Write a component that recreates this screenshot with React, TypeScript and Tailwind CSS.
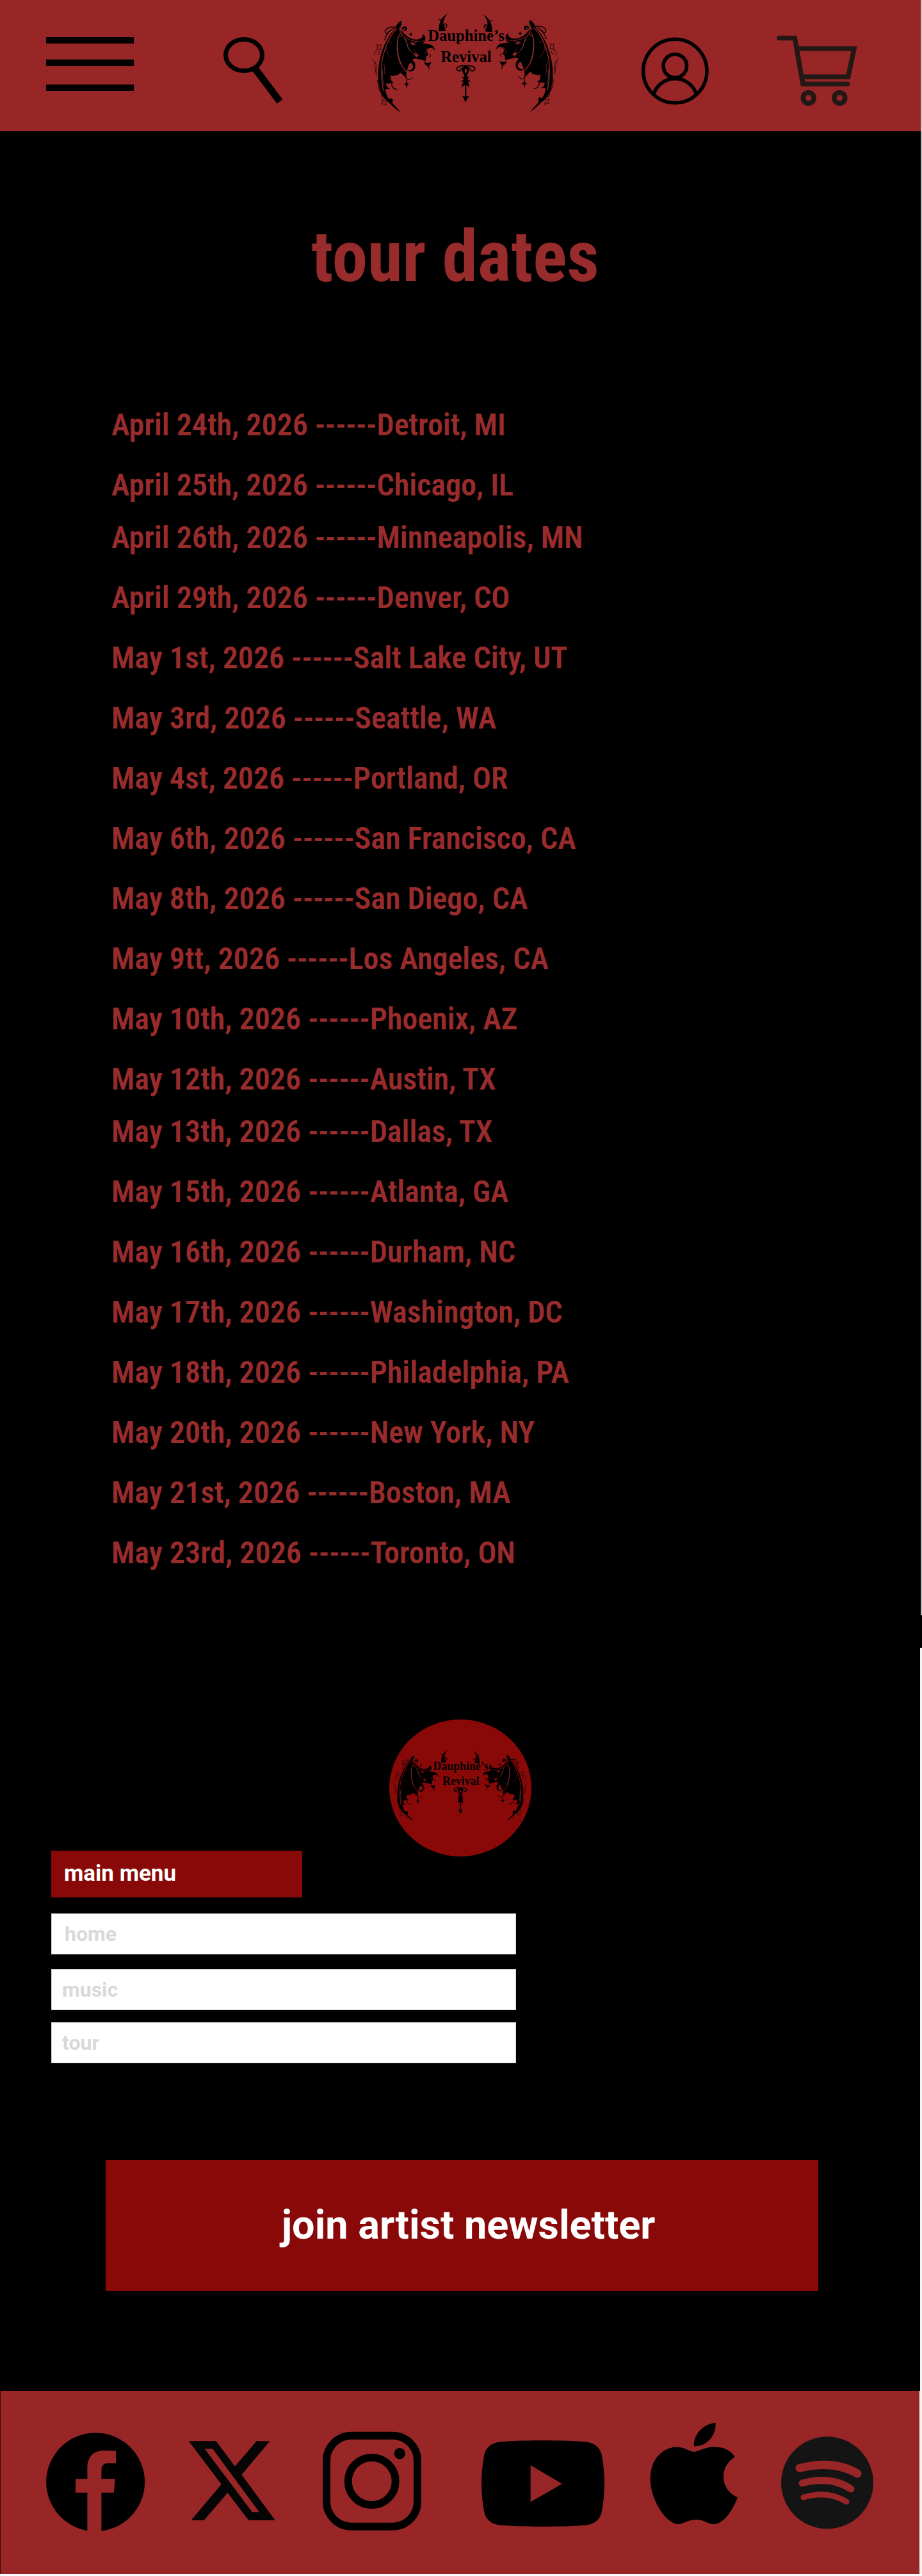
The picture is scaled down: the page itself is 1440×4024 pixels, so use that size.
import type { ReactNode } from "react";

const BRICK = "#982626";
const CRIMSON = "#890909";

const tourGroups: [string, string][][] = [
  [
    ["April 24th, 2026", "Detroit, MI"],
    ["April 25th, 2026", "Chicago, IL"],
  ],
  [
    ["April 26th, 2026", "Minneapolis, MN"],
    ["April 29th, 2026", "Denver, CO"],
    ["May 1st, 2026", "Salt Lake City, UT"],
    ["May 3rd, 2026", "Seattle, WA"],
    ["May 4st, 2026", "Portland, OR"],
    ["May 6th, 2026", "San Francisco, CA"],
    ["May 8th, 2026", "San Diego, CA"],
    ["May 9tt, 2026", "Los Angeles, CA"],
    ["May 10th, 2026", "Phoenix, AZ"],
    ["May 12th, 2026", "Austin, TX"],
  ],
  [
    ["May 13th, 2026", "Dallas, TX"],
    ["May 15th, 2026", "Atlanta, GA"],
    ["May 16th, 2026", "Durham, NC"],
    ["May 17th, 2026", "Washington, DC"],
    ["May 18th, 2026", "Philadelphia, PA"],
    ["May 20th, 2026", "New York, NY"],
    ["May 21st, 2026", "Boston, MA"],
    ["May 23rd, 2026", "Toronto, ON"],
  ],
];

function Wing({ ground }: { ground: string }) {
  return (
    <g strokeLinecap="round" strokeLinejoin="round">
      {/* membrane */}
      <path
        fill="#000"
        d="M263 97 C248 102 236 116 232 134 C205 160 180 205 167 250 C153 295 148 345 155 395 C160 430 175 462 203 482 C222 500 240 516 258 529 C244 508 228 496 217 480 C223 474 222 464 214 461 C208 459 203 463 204 468 C194 452 187 436 185 418 L208 416 C196 412 188 402 190 390 C200 396 212 386 226 388 C210 378 204 366 212 352 C220 362 226 350 238 354 C242 346 246 344 249 348 C252 340 258 338 262 346 C270 352 278 360 285 371 C282 350 284 334 290 322 C296 300 306 284 322 274 C340 276 356 280 376 287 C372 272 378 262 388 256 C378 244 378 232 390 226 C400 222 410 226 418 237 C416 218 402 206 384 207 C360 202 334 202 312 213 C304 196 296 184 286 176 C270 164 258 150 252 134 C262 124 266 110 263 97 Z"
      />
      {/* arm hooks */}
      <path fill="#000" d="M256 134 C270 158 290 176 316 184 C340 188 362 182 362 160 C376 168 378 190 362 202 C344 214 312 204 294 190 C276 176 262 158 256 134 Z" />
      <path fill="#000" d="M262 132 C272 118 288 124 287 136 C286 146 274 148 272 140 C278 142 282 136 276 133 C270 131 268 140 274 150 Z" />
      <path fill="#000" d="M290 284 C312 272 330 294 326 314 C322 334 300 342 288 328 C304 332 318 322 315 308 C312 296 302 290 290 296 Z" />
      <path fill="#000" d="M206 350 C188 352 178 368 184 384 C192 376 200 368 214 368 Z" />
      <path fill="#000" d="M365 291 C380 296 392 296 401 289 C398 300 394 306 391 309 L391 334 L386 312 C376 306 370 300 365 291 Z" />
      <path fill="#000" d="M285 378 L289 391 L298 395 L289 399 L285 415 L281 399 L272 395 L281 391 Z" />
      <path fill="#000" d="M305 151 L308 158 L314 161 L308 164 L305 171 L302 164 L296 161 L302 158 Z" />
      {/* veins showing the ground colour */}
      <g fill="none" stroke={ground}>
        <path strokeWidth="4" d="M240 134 C210 160 185 215 174 265 C164 310 166 375 176 425" />
        <path strokeWidth="4" d="M247 170 C236 210 240 262 256 296 C264 312 276 322 282 334" />
        <path strokeWidth="3" d="M268 172 C288 192 286 222 302 238 C310 250 324 254 338 258" />
        <path strokeWidth="3" d="M250 136 C262 170 290 192 336 194" />
        <path strokeWidth="2" d="M204 180 C200 204 208 206 216 200 M190 216 C186 240 200 262 214 272 M178 300 C188 320 176 336 186 354" />
        <path strokeWidth="2" d="M300 206 C322 192 344 200 366 190 M320 234 C332 240 328 252 322 256 M384 226 C374 236 370 244 372 254" />
        <circle cx="256" cy="164" r="7" strokeWidth="3" />
      </g>
      <path fill={ground} d="M330 246 L335 254 L344 259 L335 263 L331 271 L327 262 L319 258 L327 254 Z" />
      <g fill="none" stroke="#6d5555" strokeWidth="2">
        <path d="M262 100 C264 114 258 124 250 130" />
        <path d="M244 180 C238 212 244 262 258 294" />
        <path d="M172 330 C174 360 172 376 178 398" />
        <path d="M280 182 C290 206 290 226 300 238" />
      </g>
      {/* flourishes */}
      <g fill="none" stroke="#000">
        <path strokeWidth="4" d="M236 130 C214 122 190 130 184 146 C182 160 200 160 200 148 M224 134 C206 140 192 160 182 186" />
        <path strokeWidth="3" d="M284 366 C290 378 308 376 312 362 M285 366 L285 384 M392 256 C402 252 400 268 392 268" />
        <path strokeWidth="4" d="M216 384 C212 402 222 420 240 418 M230 346 C236 352 244 352 250 344" />
        <path strokeWidth="3" d="M149 376 C152 410 160 430 172 446 C162 446 164 456 176 456" />
        <g stroke="#2a0a0a" strokeWidth="3">
          <path d="M136 262 C130 244 142 234 152 240 C164 246 158 260 148 256 M126 278 C138 286 136 320 144 352 M138 290 C148 310 140 330 142 344" />
          <path d="M146 208 L154 212 L166 210 L161 222 L165 234 L154 230 L144 232 L149 220 Z M170 466 L180 470 L191 466 L187 478 L190 494 L181 488 L169 488 L174 478 Z" />
        </g>
      </g>
    </g>
  );
}

function Horn() {
  return (
    <g>
      <path d="M477 64 C456 88 450 112 470 144 L436 146 C434 118 444 82 477 64 Z" />
      <path
        fill="none"
        stroke="#000"
        strokeWidth="4"
        strokeLinecap="round"
        d="M456 134 C470 132 478 122 472 114 C466 108 458 116 464 121 M444 112 C450 100 444 88 438 92"
      />
    </g>
  );
}

function BandLogo({ ground, className }: { ground: string; className: string }) {
  return (
    <svg viewBox="120 60 882 472" className={className} role="img" aria-label="Dauphine's Revival">
      <Wing ground={ground} />
      <g transform="translate(1122 -4) scale(-1 1)">
        <Wing ground={ground} />
      </g>
      <Horn />
      <g transform="translate(1122 4) scale(-1 1)">
        <Horn />
      </g>
      {/* dagger pendant */}
      <g strokeLinecap="round" strokeLinejoin="round">
        <path
          fill="none"
          stroke="#000"
          strokeWidth="5"
          d="M562 310 C548 306 526 308 519 322 C524 338 544 334 538 322 M562 310 C576 306 600 308 606 322 C600 338 580 334 586 322"
        />
        <path d="M562 304 L570 314 C586 312 582 330 570 350 L567 362 L580 358 L570 372 L586 382 L570 384 C580 392 580 404 578 412 C574 402 570 400 565 400 L565 452 L578 449 C572 460 566 466 561 480 C556 466 552 460 546 449 L558 452 L558 400 C552 400 548 402 546 412 C542 404 544 392 554 384 L540 382 L554 372 L542 358 L557 362 L554 350 C542 330 538 312 554 314 Z" />
        <path fill={ground} d="M562 320 L568 330 L562 346 L556 330 Z" />
      </g>
      <g fontFamily="'Liberation Serif', serif" fontWeight="700" textAnchor="middle" fill="#000">
        <text x="564" y="193" fontSize="74">
          Dauphine’s
        </text>
        <text x="564" y="290" fontSize="74">
          Revival
        </text>
      </g>
    </svg>
  );
}

function SocialLink({ label, children }: { label: string; children: ReactNode }) {
  return (
    <a href="#" aria-label={label} className="shrink-0">
      {children}
    </a>
  );
}

function MenuLink({ children, className }: { children: ReactNode; className: string }) {
  return (
    <a
      href="#"
      className={`flex h-16 items-center border border-gray-300 bg-white text-[32px] font-bold text-[#d9d9d9] ${className}`}
    >
      {children}
    </a>
  );
}

export default function App() {
  return (
    <div className="bg-[#f3f3f3] font-['Roboto',sans-serif]">
      <header className="flex items-center justify-between border-r-2 border-[#d0c4c4] bg-[#982626] pr-[99px] pl-[72px]">
        <button type="button" aria-label="Open menu" className="shrink-0">
          <svg viewBox="0 0 137 205" className="w-[137px]">
            <path d="M0 58h137v10H0z M0 93h137v10H0z M0 132h137v10H0z" />
          </svg>
        </button>
        <button type="button" aria-label="Search" className="shrink-0">
          <svg viewBox="315 0 160 205" className="w-[160px]" fill="none" stroke="#000">
            <ellipse cx="381" cy="86" rx="28.5" ry="24.5" strokeWidth="7" />
            <path d="M399 108 L437 158.5" strokeWidth="11" />
          </svg>
        </button>
        <a href="#" className="shrink-0">
          <BandLogo ground={BRICK} className="mb-[8px] w-[294px]" />
        </a>
        <button type="button" aria-label="Account" className="shrink-0">
          <svg viewBox="980 0 128 205" className="w-[128px]" fill="none" stroke="#000" strokeWidth="5.5">
            <circle cx="1054.3" cy="111" r="49.7" />
            <circle cx="1054.3" cy="103" r="18.3" />
            <path d="M1021 147 A35 35 0 0 1 1087.6 147" />
          </svg>
        </button>
        <button type="button" aria-label="Cart" className="shrink-0">
          <svg viewBox="1213 0 126 205" className="w-[126px]" fill="none" stroke="#231815" strokeWidth="7.5">
            <path d="M1217 59.5 H1241.3 L1254 131.3 H1323.5" strokeLinecap="round" />
            <path d="M1245 76 H1334 L1324.7 120 H1252" />
            <circle cx="1262.7" cy="153" r="8.5" />
            <circle cx="1311.3" cy="153" r="8.5" />
          </svg>
        </button>
      </header>

      <main>
        <section className="border-r-2 border-[#b8b8b8] bg-black pt-[136px] pb-[50px] font-['Roboto_Condensed','Roboto',sans-serif] text-[#982b2b]">
          <h1 className="pr-4 text-center text-[111px] leading-[120px] font-bold">tour dates</h1>
          <div className="mt-[156px] -space-y-3 pl-[174px] text-5xl leading-[94px] font-semibold">
            {tourGroups.map((group) => (
              <ul key={group[0][0]} className="leading-[94px]">
                {group.map(([date, city]) => (
                  <li key={date}>
                    {date} ------{city}
                  </li>
                ))}
              </ul>
            ))}
          </div>
        </section>

        <div className="h-[51px] bg-black" />

        <section className="mr-[3px] bg-black pt-[112px] pb-[156px]">
          <div className="mx-auto flex h-[214px] w-[222px] items-center justify-center rounded-[50%] bg-[#890909]">
            <BandLogo ground={CRIMSON} className="mb-[6px] w-[212px]" />
          </div>

          <nav aria-label="Main menu" className="-mt-[9px] ml-[80px]">
            <h2 className="flex h-[73px] w-[392px] items-center bg-[#890909] pl-5 text-[35px] font-bold text-white">
              main menu
            </h2>
            <div className="mt-[25px] flex w-[726px] flex-col">
              <MenuLink className="pl-5">home</MenuLink>
              <MenuLink className="mt-[23px] pl-4">music</MenuLink>
              <MenuLink className="mt-[19px] pl-4">tour</MenuLink>
            </div>
          </nav>

          <div className="mt-[151px] mr-[159px] ml-[165px]">
            <button
              type="button"
              className="h-[205px] w-full bg-[#890909] pl-5 text-center text-[63px] font-bold text-white"
            >
              join artist newsletter
            </button>
          </div>
        </section>
      </main>

      <footer className="mr-[4px] mb-[3px] flex items-center justify-between border-l border-[#3a0c0c] bg-[#982626] pr-[72px] pl-[71px]">
        <SocialLink label="Facebook">
          <svg viewBox="72 0 156 286" className="w-[156px]">
            <path
              fillRule="evenodd"
              d="M136.4 218.2 A77 77 0 1 1 158.4 218.7 V158.7 H177.7 L180 137.3 H158.4 V125 C158.4 116 162 113 168 113 H181 V94 C176 93 170 93 164 93 C145 93 136.4 103 136.4 121 V137.3 H118 V158.7 H136.4 Z"
            />
          </svg>
        </SocialLink>
        <SocialLink label="X">
          <svg viewBox="295 0 143 286" className="w-[143px]">
            <path
              fill="#050505"
              fillRule="evenodd"
              d="M294.8 78.3 H337.5 L366.9 117.7 L400.8 78.3 H421.5 L377.4 130.7 L429.8 202 H388.4 L355.4 159 L318.6 202 H298.4 L345.7 145.7 Z M319.6 90.3 L394 189.3 H405 L332 90.3 Z"
            />
          </svg>
        </SocialLink>
        <SocialLink label="Instagram">
          <svg viewBox="505 0 181 286" className="w-[181px]" fill="none" stroke="#000" strokeWidth="12">
            <rect x="511" y="69.7" width="142" height="142" rx="39" />
            <circle cx="581.7" cy="141" r="37" />
            <circle cx="625.3" cy="97.7" r="8.7" fill="#000" stroke="none" />
          </svg>
        </SocialLink>
        <SocialLink label="YouTube">
          <svg viewBox="753 0 197 286" className="w-[197px]">
            <path
              fillRule="evenodd"
              d="M849 77.3 C880 77.3 900 78 916 79.5 C930 81 939 89 941 101 Q945 123 945 144.5 Q945 166 941 188 C939 200 930 208 916 209.5 C900 211 880 211.7 849 211.7 C818 211.7 798 211 782 209.5 C768 208 759 200 757 188 Q753 166 753 144.5 Q753 123 757 101 C759 89 768 81 782 79.5 C798 78 818 77.3 849 77.3 Z M829.7 116 V173.3 L878.9 145 Z"
            />
          </svg>
        </SocialLink>
        <SocialLink label="Apple Music">
          <svg viewBox="1016 0 138 286" className="w-[138px]">
            <path d="M1118.5 49.7 C1120 68 1106 87 1085 86.3 C1083 69 1099 51 1118.5 49.7 Z" />
            <path d="M1085.5 95 C1078 95 1070 87.5 1058 87.5 C1040 87.5 1016.6 103 1016.6 137 C1016.6 172 1043 208 1059 208 C1069 208 1075 201 1088.5 201 C1101 201 1106 208 1116 208 C1133 208 1148 181 1153 165.7 C1142 162 1131 150 1131 134 C1131 119 1139 109 1149 103 C1142 93 1131 87.3 1116 87.3 C1102 87.3 1092 95 1085.5 95 Z" />
          </svg>
        </SocialLink>
        <SocialLink label="Spotify">
          <svg viewBox="1220 0 144 286" className="w-[144px]" fill="none" stroke={BRICK} strokeLinecap="round">
            <circle cx="1292" cy="143.3" r="72" fill="#141414" stroke="none" />
            <path d="M1249 120.5 Q1302 107 1339 129" strokeWidth="13" />
            <path d="M1253 144 Q1298 132 1329 153" strokeWidth="11" />
            <path d="M1255 166 Q1293 155 1322 173" strokeWidth="9" />
          </svg>
        </SocialLink>
      </footer>
    </div>
  );
}
